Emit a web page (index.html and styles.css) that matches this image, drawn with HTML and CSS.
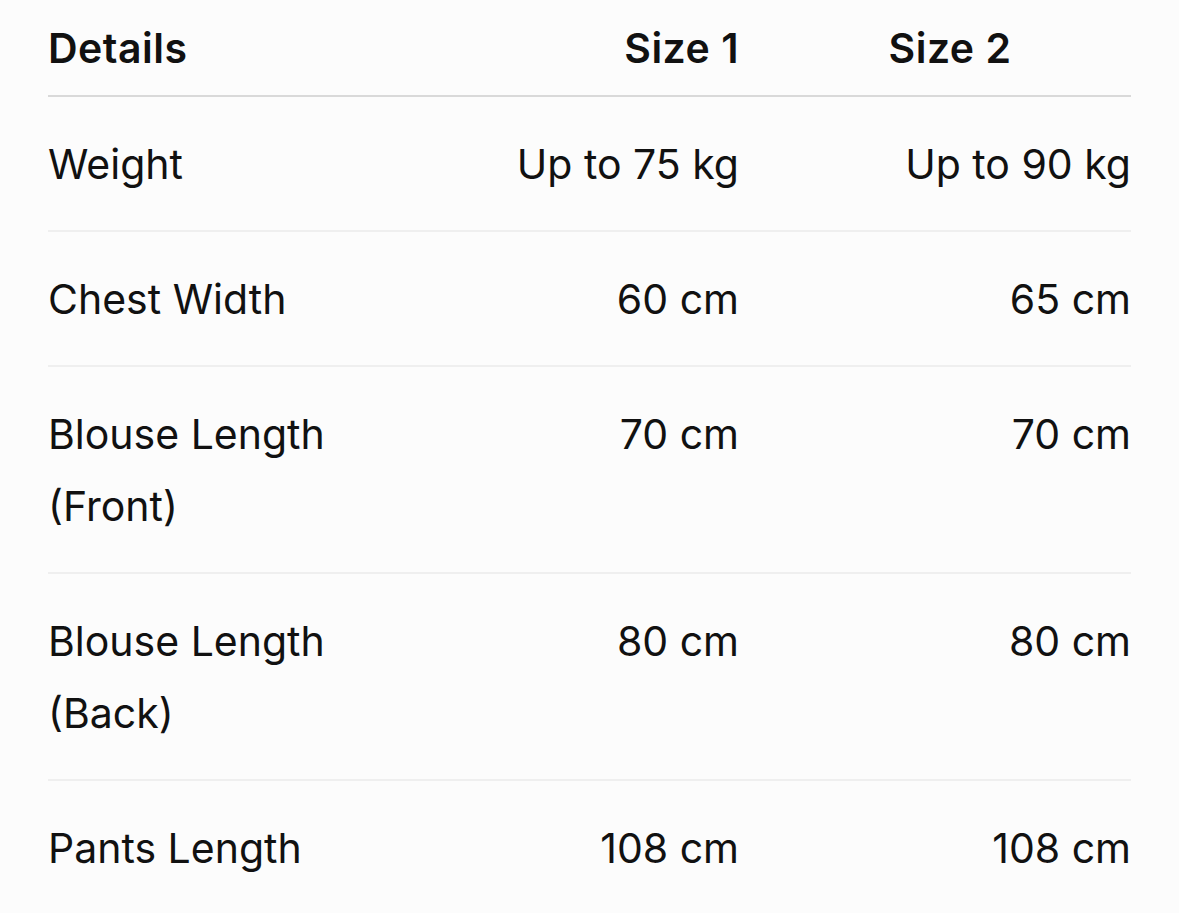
FILE: index.html
```html
<!DOCTYPE html>
<html lang="en">
<head>
<meta charset="utf-8">
<title>Size chart</title>
<link rel="stylesheet" href="styles.css">
</head>
<body>
<div class="wrap">
<table class="sizes">
  <colgroup>
    <col class="c1"><col class="c2"><col class="c3">
  </colgroup>
  <thead>
    <tr>
      <th class="label">Details</th>
      <th class="v1">Size 1</th>
      <th class="v2">Size 2</th>
    </tr>
  </thead>
  <tbody>
    <tr><td class="label">Weight</td><td class="v1">Up to 75 kg</td><td class="v2">Up to 90 kg</td></tr>
    <tr><td class="label">Chest Width</td><td class="v1">60 cm</td><td class="v2">65 cm</td></tr>
    <tr><td class="label">Blouse Length (Front)</td><td class="v1">70 cm</td><td class="v2">70 cm</td></tr>
    <tr><td class="label">Blouse Length (Back)</td><td class="v1">80 cm</td><td class="v2">80 cm</td></tr>
    <tr><td class="label">Pants Length</td><td class="v1">108 cm</td><td class="v2">108 cm</td></tr>
  </tbody>
</table>
</div>
</body>
</html>
```

FILE: styles.css
```css
html, body {
  margin: 0;
  padding: 0;
  background: #fcfcfc;
}
body {
  font-family: Inter, "Liberation Sans", sans-serif;
  color: #111111;
}
.wrap {
  padding: 0 48px;
}
.sizes {
  width: 1083px;
  border-collapse: collapse;
  table-layout: fixed;
  font-size: 41px;
  line-height: 72px;
}
.c1 { width: 340px; }
.c2 { width: 351px; }
.c3 { width: 392px; }
.sizes th {
  font-weight: 600;
  letter-spacing: 0.5px;
  padding: 12px 0 11px;
  border-bottom: 2px solid #d9d9d9;
  vertical-align: top;
}
.sizes td {
  font-weight: 400;
  padding: 31px 0 30px;
  border-bottom: 2px solid #efefef;
  vertical-align: top;
}
.sizes tbody tr:last-child td {
  border-bottom: none;
}
.label { text-align: left; }
.v1 { text-align: right; }
td.v2 { text-align: right; }
th.v2 { text-align: center; padding-left: 30px; }
```
